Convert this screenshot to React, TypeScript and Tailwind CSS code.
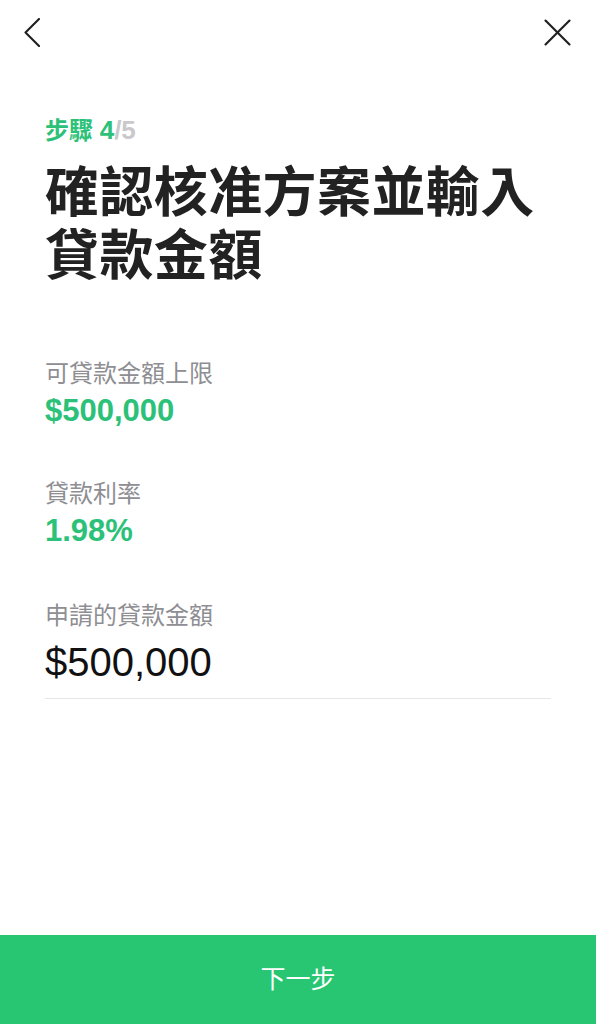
import React from "react";

export default function App() {
  return (
    <div className="w-[596px] h-[1024px] bg-white flex flex-col font-['Liberation_Sans','Noto_Sans_CJK_TC',sans-serif] overflow-hidden">
      <div className="h-[64px] flex items-center justify-between pl-[24px] pr-[25px] shrink-0">
        <svg width="16" height="29" viewBox="0 0 16 29" fill="none">
          <polyline points="15,1 1.5,14.5 15,28" stroke="#1f1f1f" strokeWidth="2.1" strokeLinecap="round" strokeLinejoin="round" />
        </svg>
        <svg width="27" height="27" viewBox="0 0 27 27" fill="none">
          <line x1="1.5" y1="1.5" x2="25.5" y2="25.5" stroke="#1f1f1f" strokeWidth="2.1" strokeLinecap="round" />
          <line x1="25.5" y1="1.5" x2="1.5" y2="25.5" stroke="#1f1f1f" strokeWidth="2.1" strokeLinecap="round" />
        </svg>
      </div>
      <div className="flex-1 flex flex-col px-[45px]">
        <div className="mt-[51px] text-[24px] leading-[30px] font-bold text-[#2cc178]">
          步驟 <span className="text-[26px]">4</span>
          <span className="text-[26px] text-[#c9c9cc]">/5</span>
        </div>
        <h1 className="mt-[16px] text-[54px] leading-[63px] font-bold text-[#222222] tracking-[0.4px]">
          確認核准方案並輸入
          <br />
          貸款金額
        </h1>
        <div className="mt-[70px] text-[24px] leading-[32px] text-[#8e8e93]">可貸款金額上限</div>
        <div className="mt-[3px] text-[31px] leading-[36px] font-bold text-[#2cc178]">$500,000</div>
        <div className="mt-[49px] text-[24px] leading-[32px] text-[#8e8e93]">貸款利率</div>
        <div className="mt-[3px] text-[31px] leading-[36px] font-bold text-[#2cc178]">1.98%</div>
        <div className="mt-[51px] text-[24px] leading-[32px] text-[#8e8e93]">申請的貸款金額</div>
        <div className="mt-[8px] pb-[14px] border-b border-[#e6e6e8] text-[40px] leading-[44px] text-[#111111]">
          $500,000
        </div>
      </div>
      <button className="h-[89px] shrink-0 w-full bg-[#28c672] text-white text-[25px] flex items-center justify-center">
        下一步
      </button>
    </div>
  );
}
